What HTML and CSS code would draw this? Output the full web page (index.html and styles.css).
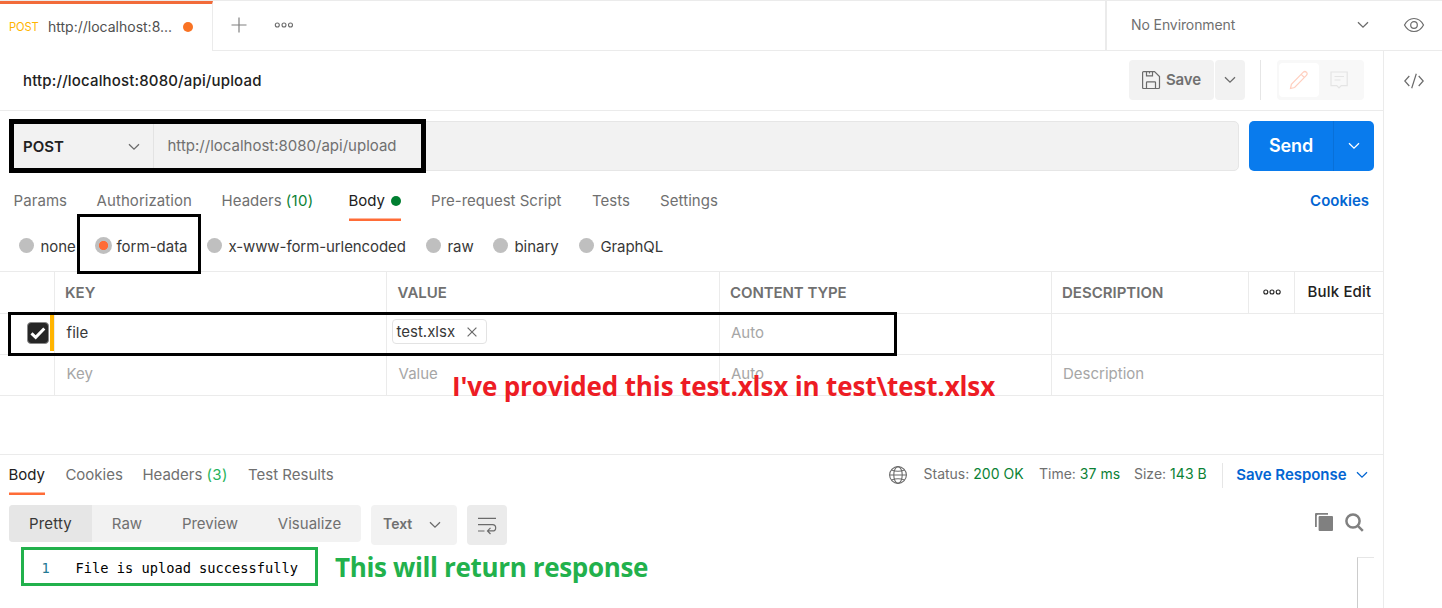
FILE: index.html
```html
<!DOCTYPE html>
<html lang="en">
<head>
<meta charset="utf-8">
<title>API request</title>
<link rel="stylesheet" href="styles.css">
</head>
<body>
<div class="app">
  <header class="topbar">
    <div class="tab">
      <span class="tab-method">POST</span>
      <span class="tab-name">http://localhost:8...</span>
      <span class="tab-dot"></span>
    </div>
    <div class="topbar-rest">
      <svg class="icon-plus" width="16" height="16" viewBox="0 0 16 16"><path d="M8 .5v15M.5 8h15"/></svg>
      <svg class="icon-dots" width="20" height="8" viewBox="0 0 20 8"><circle cx="3.3" cy="4" r="2"/><circle cx="10" cy="4" r="2"/><circle cx="16.5" cy="4" r="2"/></svg>
    </div>
    <div class="environment">
      <span class="env-name">No Environment</span>
      <svg class="chev" width="12" height="8" viewBox="0 0 12 8"><path d="M1 1.2l5 5 5-5"/></svg>
      <svg class="icon-eye" width="22" height="16" viewBox="0 0 22 16"><path d="M1.5 8C3.8 3.6 7 1.5 11 1.5S18.200 3.600 20.500 8C18.200 12.400 15 14.500 11 14.500S3.800 12.400 1.500 8z"/><circle cx="11" cy="8" r="3.300"/></svg>
    </div>
  </header>

  <div class="workspace">
    <main class="main">
      <div class="title-row">
        <h1 class="title">http://localhost:8080/api/upload</h1>
        <button class="save"><svg class="icon-line" width="20" height="20" viewBox="0 0 20 20"><path d="M1.600 2.600q0-1 1-1h10.900l5 5v10.900q0 1-1 1H2.600q-1 0-1-1zM5.500 1.600v4.200h6V1.600M8.500 2v1.500M5.500 18.500v-6q0-.7.7-.7h7.600q.7 0 .7.7v6"/></svg><span>Save</span></button>
        <button class="save-more"><svg class="chev" width="12" height="8" viewBox="0 0 12 8"><path d="M1 1.200l5 5 5-5"/></svg></button>
        <span class="rule"></span>
        <div class="modes">
          <span class="mode mode-on"><svg class="icon-pencil" width="20" height="20" viewBox="0 0 20 20"><path d="M1.500 18.500l.9-4.200L14.300 2.200q1.600-1.400 3.100 0 1.500 1.600 0 3.200L5.600 17.500zM12.200 4.300l3.200 3.200"/></svg></span>
          <span class="mode"><svg class="icon-note" width="20" height="20" viewBox="0 0 20 20"><path d="M2 2h16.200v13.700h-6L10 17.900l-2.200-2.200H2zM5.500 6.500h9.500M5.500 10h6"/></svg></span>
        </div>
      </div>

      <div class="url-row">
        <div class="url-bar">
          <div class="method"><span>POST</span><svg class="chev" width="12" height="8" viewBox="0 0 12 8"><path d="M1 1.200l5 5 5-5"/></svg></div>
          <div class="url">http://localhost:8080/api/upload</div>
        </div>
        <div class="send"><span class="send-label">Send</span><span class="send-more"><svg class="chev chev-white" width="12" height="8" viewBox="0 0 12 8"><path d="M1 1.200l5 5 5-5"/></svg></span></div>
      </div>

      <nav class="req-tabs">
        <span class="sp06">Params</span>
        <span class="sp06">Authorization</span>
        <span>Headers <b class="count">(10)</b></span>
        <span class="active"><i class="under">Body<em class="green-dot"></em></i></span>
        <span>Pre-request Script</span>
        <span>Tests</span>
        <span class="sp06">Settings</span>
        <a class="link">Cookies</a>
      </nav>

      <div class="body-types">
        <label class="type"><i class="radio"></i><span>none</span></label>
        <label class="type selected"><i class="radio"></i><span>form-data</span></label>
        <label class="type"><i class="radio"></i><span class="tight">x-www-form-urlencoded</span></label>
        <label class="type"><i class="radio"></i><span>raw</span></label>
        <label class="type"><i class="radio"></i><span>binary</span></label>
        <label class="type"><i class="radio"></i><span class="tight">GraphQL</span></label>
      </div>

      <div class="table">
        <div class="tr head">
          <div class="td"></div><div class="td">KEY</div><div class="td">VALUE</div><div class="td tight">CONTENT TYPE</div><div class="td">DESCRIPTION</div>
          <div class="td more"><svg class="icon-dots dark" width="20" height="8" viewBox="0 0 20 8"><circle cx="3.800" cy="4" r="2"/><circle cx="10" cy="4" r="2"/><circle cx="16.200" cy="4" r="2"/></svg></div>
          <div class="td bulk">Bulk Edit</div>
        </div>
        <div class="tr row">
          <div class="td check-cell"><span class="check"><svg width="16" height="14" viewBox="0 0 16 14"><path d="M1.500 7.300l4.200 4L14.300 2.500"/></svg></span><span class="grip"></span></div>
          <div class="td">file</div>
          <div class="td file-cell"><span class="file">test.xlsx<svg width="10" height="10" viewBox="0 0 10 10"><path d="M.6.6l8.800 8.800M9.400.6L.6 9.400"/></svg></span></div>
          <div class="td hint">Auto</div><div class="td"></div>
        </div>
        <div class="tr row empty">
          <div class="td"></div><div class="td">Key</div><div class="td">Value</div><div class="td auto">Auto</div><div class="td desc">Description</div>
        </div>
      </div>

      <section class="response">
        <div class="res-head">
          <nav class="res-tabs">
            <span class="active"><i class="under">Body</i></span><span>Cookies</span><span>Headers <b class="count">(3)</b></span><span>Test Results</span>
          </nav>
          <div class="status">
            <svg class="icon-globe" width="20" height="20" viewBox="0 0 20 20"><circle cx="10" cy="10" r="8.400"/><ellipse cx="10" cy="10" rx="4.200" ry="8.400"/><path d="M3.500 5q6.500 2.400 13 0M1.600 10h16.800M3.500 15q6.500-2.400 13 0"/></svg>
            <span class="stat">Status: <b>200 OK</b></span><span class="stat">Time: <b>37 ms</b></span><span class="stat">Size: <b>143 B</b></span>
            <a class="save-res">Save Response <svg class="chev chev-blue" width="12" height="8" viewBox="0 0 12 8"><path d="M1 1.200l5 5 5-5"/></svg></a>
          </div>
        </div>
        <div class="tools">
          <div class="views"><span class="on">Pretty</span><span>Raw</span><span>Preview</span><span>Visualize</span></div>
          <div class="format">Text<svg class="chev" width="12" height="8" viewBox="0 0 12 8"><path d="M1 1.200l5 5 5-5"/></svg></div>
          <div class="wrap"><svg class="icon-line" width="20" height="20" viewBox="0 0 20 20"><path d="M1 3.300h18M1 9.600h14.500q3.200 0 3.200 3.300 0 3-3.200 3h-4.800M1 16h6.500M13.500 12.800l-3 3.100 3 3.100"/></svg></div>
          <svg class="icon-copy" width="18" height="18" viewBox="0 0 18 18"><path d="M0 1q0-1 1-1h12v1.800H3.200q-1.400 0-1.400 1.400V14H0z"/><rect x="3.600" y="3" width="14.400" height="15" rx="1"/></svg>
          <svg class="icon-search" width="19" height="19" viewBox="0 0 19 19"><circle cx="8" cy="8" r="6.600"/><path d="M12.800 12.800l5 5"/></svg>
        </div>
        <div class="code">
          <span class="line-no">1</span><span class="line">File is upload successfully</span><span class="minimap"></span>
        </div>
      </section>
    </main>
    <aside class="side"><svg class="icon-line" width="20" height="16" viewBox="0 0 20 16"><path d="M5.300 3L.8 8l4.500 5M14.700 3l4.500 5-4.500 5M12.300.8L7.700 15.200"/></svg></aside>
  </div>

  <div class="mark mark-url"></div>
  <div class="mark mark-form"></div>
  <div class="mark mark-row"></div>
  <div class="mark mark-code"></div>
  <div class="note note-red">I've provided this test.xlsx in test\test.xlsx</div>
  <div class="note note-green">This will return response</div>
</div>
</body>
</html>
```
FILE: styles.css
```css
* { box-sizing: border-box; }
body { margin: 0; background: #fff; font-family: Inter, "Liberation Sans", sans-serif; font-size: 15px; line-height: 20px; color: #707070; }
button { border: 0; padding: 0; font: inherit; color: inherit; }
b { font-weight: 400; }
i, em { font-style: normal; }
svg { display: block; flex: none; fill: none; stroke: #6b6b6b; stroke-width: 1.2; }
.app { position: relative; width: 1442px; height: 608px; overflow: hidden; display: flex; flex-direction: column; white-space: nowrap; }
.chev { stroke-width: 1.3; }
.sp06 { letter-spacing: .06px; }
.tight { letter-spacing: -.08px; }

.topbar { display: flex; height: 51px; flex: none; border-top: 1px solid #ebebeb; }
.tab { width: 213px; border-right: 1px solid #ebebeb; border-top: 3px solid #f26b3a; display: flex; align-items: center; padding: 0 0 2px 9px; font-size: 14px; color: #505050; }
.tab-method { width: 39px; font-size: 11.2px; letter-spacing: -.1px; color: #ffb400; }
.tab-name { width: 135px; }
.tab-dot { width: 10px; height: 10px; border-radius: 50%; background: #f97324; }
.topbar-rest { flex: 1; display: flex; align-items: center; padding-bottom: 1px; border-bottom: 1px solid #ebebeb; }
.icon-plus { margin-left: 18px; stroke: #808080; }
.icon-dots { margin-left: 27px; stroke-width: 1.1; }
.environment { width: 337px; border-left: 2px solid #ebebeb; border-bottom: 1px solid #ebebeb; display: flex; align-items: center; padding: 0 0 1px 24px; font-size: 14px; }
.env-name { width: 226px; letter-spacing: -.1px; }
.icon-eye { margin-left: 34px; margin-top: -1px; }

.workspace { flex: 1; display: flex; min-height: 0; }
.main { width: 1384px; border-right: 1px solid #ebebeb; display: flex; flex-direction: column; }
.side { flex: 1; padding: 22px 0 0 20px; }

.title-row { height: 60px; flex: none; display: flex; align-items: center; padding: 0 19px 1px 0; border-bottom: 1px solid #ebebeb; }
.title { margin: 1px auto 0 23px; font-size: 15px; font-weight: 500; letter-spacing: .16px; color: #212121; }
.save { display: flex; align-items: center; width: 85px; height: 40px; padding-left: 12px; gap: 5px; background: #f2f2f2; border-radius: 4px; font-weight: 600; letter-spacing: -.15px; }
.save-more { display: grid; place-items: center; width: 30px; height: 40px; margin-left: 1px; background: #f2f2f2; border-radius: 4px; }
.rule { width: 1px; height: 40px; margin: 0 16px 0 15px; background: #e6e6e6; }
.modes { display: flex; width: 87px; height: 40px; padding: 3px 2px; background: #f8f8f8; border-radius: 4px; }
.mode { display: grid; place-items: center; width: 40px; border-radius: 4px; }
.mode-on { background: #fff; }
.icon-pencil { stroke: #ffcfbf; }
.icon-note { stroke: #e4e4e4; }

.url-row { display: flex; height: 50px; flex: none; margin: 10px 9px 0; gap: 10px; }
.url-bar { flex: 1; display: flex; border: 1px solid #e6e6e6; border-radius: 5px; background: #f2f2f2; }
.method { width: 144px; display: flex; align-items: center; justify-content: space-between; padding: 1px 13px 0 13px; border-right: 1px solid #e3e3e3; font-weight: 600; color: #212121; }
.url { align-self: center; padding-left: 13.500px; }
.send { width: 125px; display: flex; border-radius: 5px; background: #097bed; color: #fff; overflow: hidden; }
.send-label { width: 84px; line-height: 50px; text-align: center; font-size: 18px; font-weight: 600; letter-spacing: -.1px; }
.send-more { flex: 1; display: grid; place-items: center; border-left: 1px solid #0870d9; }
.chev-white { stroke: #fff; }

.req-tabs { display: grid; grid-template-columns: 83px 125px 126.500px 83px 161px 68px 650px 60px; height: 40px; flex: none; margin: 10px 0 0 13.600px; line-height: 40px; }
.active { color: #212121; }
.count { color: #0b8235; letter-spacing: .35px; }
.under { position: relative; display: inline-flex; align-items: center; height: 40px; box-shadow: inset 0 -2.500px #ff6c37; }
.req-tabs .under { width: 52px; margin-left: .900px; text-indent: -.500px; }
.green-dot { width: 10px; height: 10px; margin-left: auto; border-radius: 50%; background: #007f31; }
.link { color: #0265d2; font-weight: 600; }

.body-types { display: grid; grid-template-columns: 76px 112px 219px 67px 86px 100px; height: 50px; flex: none; padding-left: 19px; align-items: center; color: #383838; }
.type { display: flex; align-items: center; gap: 6.400px; padding-top: 1px; }
.radio { width: 15px; height: 15px; margin-top: -2px; border-radius: 50%; background: #bfbfbf; }
.selected .radio { width: 17px; height: 17px; background: radial-gradient(circle, #ff6c37 4.300px, #bfbfbf 4.800px); }
.selected { gap: 4.500px; }

.table { flex: none; border-bottom: 1px solid #ebebeb; }
.tr { display: grid; height: 41px; border-top: 1px solid #ebebeb; line-height: 38px; }
.td { padding-left: 11.600px; border-left: 1px solid #ebebeb; }
.td:first-child { border-left: 0; padding: 0; }
.head { grid-template-columns: 54px 332px 333px 332px 197px 46px 89px; height: 42px; line-height: 41px; font-weight: 600; }
.head .td { padding-left: 10px; }
.head .td:nth-child(3) { padding-left: 10.600px; }
.head .more { display: flex; align-items: center; padding: 0; }
.head .more .dark { margin-left: 13px; margin-top: -1px; stroke: #212121; }
.head .bulk { padding-left: 12.600px; font-weight: 500; letter-spacing: .15px; line-height: 40px; color: #212121; }
.row { grid-template-columns: 54px 332px 333px 332px 332px; color: #383838; }
.row .hint { padding-left: 11px; line-height: 37px; }
.row .hint, .empty { color: #a6a6a6; }
.empty .auto, .empty .desc { padding-left: 11px; }
.check-cell { display: flex; align-items: flex-start; }
.check { display: grid; place-items: center; width: 22px; height: 22px; margin: 8px 1px 0 27px; border-radius: 4px; background: #262626; border: 1px solid #888; }
.check svg { stroke: #fff; stroke-width: 3; }
.grip { width: 4px; height: 37px; background: #ffb400; }
.row .file-cell { padding: 5px 0 0 5px; }
.file { display: flex; align-items: center; justify-content: space-between; width: 95px; height: 25px; padding: 0 9px 0 3.500px; border: 1px solid #e3e3e3; border-radius: 4px; }

.response { flex: 1; display: flex; flex-direction: column; margin-top: 58px; border-top: 1px solid #ebebeb; }
.res-head { display: flex; justify-content: space-between; height: 40px; flex: none; line-height: 40px; }
.res-tabs { display: grid; grid-template-columns: 56.900px 77px 105.600px 100px; padding-left: 8.500px; }
.res-tabs .under { width: 36px; margin-left: .500px; text-indent: -.600px; }
.res-tabs .count { color: #26b35b; letter-spacing: .3px; }
.status { display: flex; align-items: center; width: 495px; font-size: 14px; }
.stat { margin-top: -2px; }
.stat:nth-child(2) { width: 115.500px; margin-left: 15.500px; }
.stat:nth-child(3) { width: 95px; }
.stat b { color: #0b8235; letter-spacing: .05px; }
.icon-globe { stroke-width: 1.1; }
.save-res { display: flex; align-items: center; height: 25px; margin-left: auto; padding: 0 15px 0 13px; gap: 9.500px; border-left: 1px solid #e6e6e6; font-size: 15px; font-weight: 600; letter-spacing: -.04px; color: #0265d2; }
.chev-blue { stroke: #0265d2; }

.tools { display: flex; height: 40px; flex: none; margin: 10px 19px 0 9px; gap: 10px; }
.views { display: grid; grid-template-columns: 83px 70px 96px 103px; width: 352px; height: 37px; line-height: 37px; text-align: center; background: #f2f2f2; border-radius: 4px; overflow: hidden; }
.views .on { background: #e6e6e6; color: #383838; letter-spacing: .15px; }
.format { display: flex; align-items: center; justify-content: space-between; width: 86px; height: 40px; padding: 0 16px 2px 12px; border-radius: 4px; background: #f2f2f2; font-size: 14px; font-weight: 600; }
.format .chev { margin-top: 2px; }
.wrap { display: grid; place-items: center; width: 40px; height: 40px; margin-right: auto; border-radius: 4px; background: #ebebeb; }
.icon-copy { margin: 8px 2px 0 0; fill: #808080; stroke: none; }
.icon-search { margin-top: 8px; stroke: #808080; stroke-width: 2.500; }
.code { flex: 1; display: flex; margin-top: 12px; padding: 0 9px 0 41.500px; font-family: "DejaVu Sans Mono", monospace; font-size: 13.700px; line-height: 22px; color: #000; }
.line-no { width: 34px; color: #237893; }
.minimap { width: 17px; margin-left: auto; border-top: 1px solid #e6e6e6; border-left: 1px solid #ccc; }

.mark { position: absolute; border: 3px solid #000; }
.mark-url { left: 9px; top: 119px; width: 417px; height: 54px; border-width: 5px; }
.mark-form { left: 77px; top: 214px; width: 124px; height: 60px; }
.mark-row { left: 8px; top: 312px; width: 889px; height: 44px; }
.mark-code { left: 21px; top: 547px; width: 297px; height: 39px; border-color: #22b14c; }
.note { position: absolute; font: 700 26px/36px "Open Sans", sans-serif; }
.note-red { left: 452px; top: 368px; color: #ed1c24; letter-spacing: -.13px; }
.note-green { left: 335px; top: 549px; color: #22b14c; letter-spacing: -.35px; }
```
